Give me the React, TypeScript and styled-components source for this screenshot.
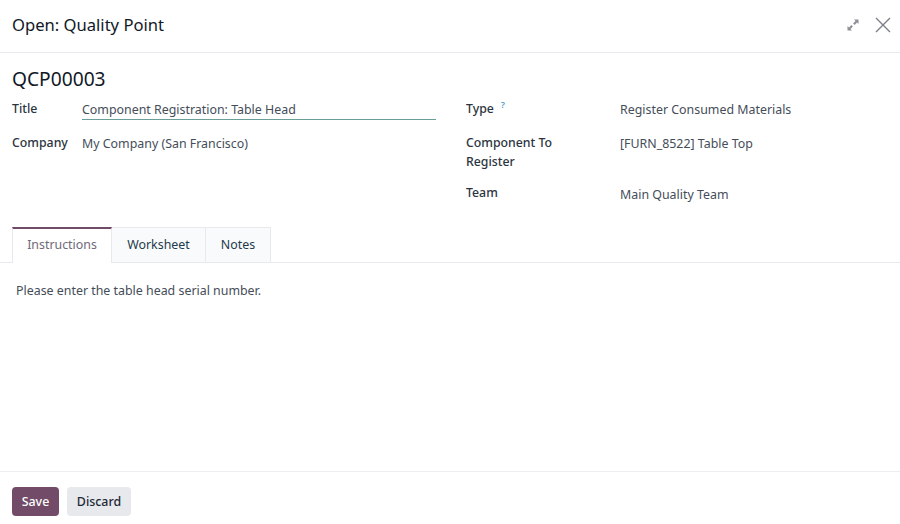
import React, { ReactElement } from 'react';
import styled, { createGlobalStyle } from 'styled-components';

const GlobalStyle = createGlobalStyle`
  html, body {
    margin: 0;
    padding: 0;
    background: #fff;
  }
  body {
    font-family: 'Noto Sans', 'Open Sans', sans-serif;
    font-size: 13px;
    color: #374151;
  }
`;

const Dialog = styled.div`
  display: flex;
  flex-direction: column;
  width: 900px;
  height: 524px;
  overflow: hidden;
  background: #fff;
`;

const Header = styled.header`
  display: flex;
  align-items: center;
  justify-content: space-between;
  box-sizing: border-box;
  height: 53px;
  padding: 0 9px 3px 12px;
  border-bottom: 1px solid #e7e9ed;
`;

const DialogTitle = styled.h1`
  margin: 0;
  font-size: 16.6px;
  font-weight: 400;
  line-height: 24px;
  color: #111827;
`;

const HeaderActions = styled.div`
  display: flex;
  align-items: center;
  gap: 16px;
`;

const IconButton = styled.button`
  display: flex;
  padding: 0;
  border: 0;
  background: none;
  color: #7b7f86;
`;

const Main = styled.main`
  flex: 1;
  padding: 14px 0 0;
`;

const RecordName = styled.h2`
  margin: 0 12px 8px;
  font-size: 19.2px;
  font-weight: 400;
  line-height: 24px;
  color: #111827;
`;

const FormGrid = styled.div`
  display: grid;
  grid-template-columns: 424px 1fr;
  column-gap: 30px;
  padding: 0 12px;
  height: 128px;
`;

const Column = styled.div`
  display: flex;
  flex-direction: column;
`;

const Row = styled.div<{ $label: number; $height: number }>`
  display: grid;
  grid-template-columns: ${(p) => p.$label}px 1fr;
  height: ${(p) => p.$height}px;
`;

const Label = styled.label`
  font-size: 12.3px;
  font-weight: 500;
  line-height: 19px;
  color: #2b3440;
`;

const Help = styled.sup`
  margin-left: 7px;
  font-size: 9px;
  font-weight: 600;
  line-height: 0;
  color: #4c9cc9;
`;

const Value = styled.div<{ $dropped?: boolean }>`
  padding-top: ${(p) => (p.$dropped ? 2 : 1)}px;
  font-size: 12.4px;
  line-height: 19px;
  color: #454d59;
`;

const InputValue = styled(Value)`
  box-sizing: border-box;
  height: 21px;
  border-bottom: 1px solid #6a9e98;
`;

const TabBar = styled.nav`
  display: flex;
  box-sizing: border-box;
  height: 36px;
  padding: 0 12px;
  border-bottom: 1px solid #e7e9ed;
`;

const Tab = styled.a<{ $width: number; $active?: boolean }>`
  display: flex;
  align-items: center;
  justify-content: center;
  box-sizing: border-box;
  width: ${(p) => p.$width}px;
  height: ${(p) => (p.$active ? 36 : 35)}px;
  padding-bottom: ${(p) => (p.$active ? 3 : 2)}px;
  font-size: 12.4px;
  color: ${(p) => (p.$active ? '#6f6a78' : '#1f3a4d')};
  background: ${(p) => (p.$active ? '#fff' : '#f9fafb')};
  border-top: ${(p) => (p.$active ? '2px solid #714b67' : '1px solid #e7e9ed')};
  border-right: 1px solid #e7e9ed;
  border-left: ${(p) => (p.$active ? '1px solid #e7e9ed' : '0')};
`;

const TabContent = styled.p`
  margin: 0;
  padding: 18px 16px 0;
  font-size: 12.4px;
  line-height: 19px;
  color: #454d59;
`;

const Footer = styled.footer`
  display: flex;
  gap: 8px;
  box-sizing: border-box;
  height: 53px;
  padding: 15px 12px 0;
  border-top: 1px solid #eceef1;
`;

const Button = styled.button<{ $primary?: boolean }>`
  box-sizing: border-box;
  height: 29px;
  padding: 0;
  width: ${(p) => (p.$primary ? 47 : 64)}px;
  border: 0;
  border-radius: 4px;
  font-family: inherit;
  font-size: 12.4px;
  font-weight: 500;
  color: ${(p) => (p.$primary ? '#fff' : '#1f2937')};
  background: ${(p) => (p.$primary ? '#714b67' : '#e7e9ed')};
`;

const ExpandIcon = (): ReactElement => (
  <svg width='12' height='12' viewBox='0 0 12 12' fill='currentColor' opacity='0.85'>
    <path d='M7 0.5h4.5V5L10 3.5 7.6 5.9 6.1 4.4 8.5 2z' />
    <path d='M5 11.5H0.5V7L2 8.5l2.4-2.4 1.5 1.5L3.5 10z' />
  </svg>
);

const CloseIcon = (): ReactElement => (
  <svg width='16' height='16' viewBox='0 0 16 16' stroke='currentColor' strokeWidth='1.4' fill='none'>
    <path d='M1 1l14 14M15 1L1 15' />
  </svg>
);

const App = (): ReactElement => (
  <Dialog>
    <GlobalStyle />
    <Header>
      <DialogTitle>Open: Quality Point</DialogTitle>
      <HeaderActions>
        <IconButton aria-label='Expand'>
          <ExpandIcon />
        </IconButton>
        <IconButton aria-label='Close'>
          <CloseIcon />
        </IconButton>
      </HeaderActions>
    </Header>
    <Main>
      <RecordName>QCP00003</RecordName>
      <FormGrid>
        <Column>
          <Row $label={70} $height={34}>
            <Label>Title</Label>
            <InputValue>Component Registration: Table Head</InputValue>
          </Row>
          <Row $label={70} $height={34}>
            <Label>Company</Label>
            <Value>My Company (San Francisco)</Value>
          </Row>
        </Column>
        <Column>
          <Row $label={154} $height={34}>
            <Label>
              Type<Help>?</Help>
            </Label>
            <Value>Register Consumed Materials</Value>
          </Row>
          <Row $label={154} $height={50}>
            <Label>
              Component To
              <br />
              Register
            </Label>
            <Value>[FURN_8522] Table Top</Value>
          </Row>
          <Row $label={154} $height={28}>
            <Label>Team</Label>
            <Value $dropped>Main Quality Team</Value>
          </Row>
        </Column>
      </FormGrid>
      <TabBar>
        <Tab $width={100} $active>
          Instructions
        </Tab>
        <Tab $width={94}>Worksheet</Tab>
        <Tab $width={65}>Notes</Tab>
      </TabBar>
      <TabContent>Please enter the table head serial number.</TabContent>
    </Main>
    <Footer>
      <Button $primary>Save</Button>
      <Button>Discard</Button>
    </Footer>
  </Dialog>
);

export default App;
